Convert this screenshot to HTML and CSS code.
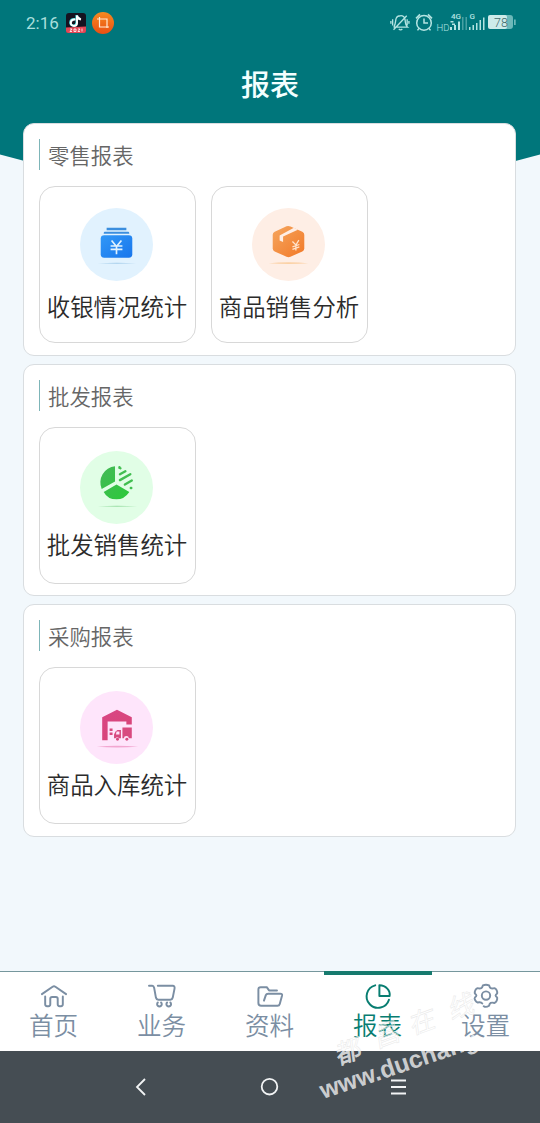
FILE: index.html
```html
<!DOCTYPE html>
<html lang="zh-CN">
<head>
<meta charset="utf-8">
<title>报表</title>
<link rel="stylesheet" href="styles.css">
</head>
<body>
<div class="phone">
  <svg class="backdrop" width="540" height="230" viewBox="0 0 540 230"><path d="M0 0H540V154.500L270 226L0 154.500Z" fill="#00767b"/></svg>
  <header class="status">
    <span class="clock">2:16</span>
    <svg class="app-icon" width="20" height="20" viewBox="0 0 20 20">
      <rect width="20" height="20" rx="3" fill="#151320"/>
      <path d="M0 14.500L20 13.500V18Q20 20 18 20H2Q0 20 0 18Z" fill="#e44756"/>
      <g fill="none" stroke-width="2"><path d="M9.500 6.500C3.500 6 3.500 13 8 13C10 13 11 12 11 10V2.500C11.500 5 12.500 6 15 6.500" stroke="#38d6d7" transform="translate(-.6 -.4)"/><path d="M9.500 6.500C3.500 6 3.500 13 8 13C10 13 11 12 11 10V2.500C11.500 5 12.500 6 15 6.500" stroke="#fff"/></g>
      <path d="M4 16l2 0-2 2.500h2M8 16h2v2.500H8zM12 16h2l-2 2.500h2M16 15.500v3" stroke="#fff" stroke-width=".8" fill="none"/>
    </svg>
    <svg class="crop-icon" width="22" height="22" viewBox="0 0 22 22"><defs><linearGradient id="crop" x2="0" y2="1"><stop stop-color="#f58a20"/><stop offset="1" stop-color="#e94f13"/></linearGradient></defs><circle cx="11" cy="11" r="11" fill="url(#crop)"/><path d="M7.500 5V15H17M5 7H15V16" fill="none" stroke="#ffe9d3" stroke-width="1.200"/></svg>
    <svg class="signals" width="130" height="24" viewBox="0 0 130 24">
      <g fill="none" stroke="#b4e4e2" stroke-width="1.500">
        <path transform="translate(3 1.200) scale(.88)" d="M4.500 16.500C6.500 14 6 10 7 7Q8 4 12 4Q16 3.800 17 8C18 12 16.500 14 20 17H4M10 19Q12 21 14 19M4 20L19 4M3 8v7M1 10v3M19.500 8v7M21.500 10v3"/>
        <g transform="translate(1 -.6)"><circle cx="36" cy="12.500" r="7.300"/><path d="M36 8V12.500H40M28 8L32 4M40 4L44 8M31 18L29.500 20M41 18L42.500 20"/></g>
      </g>
      <text x="49.500" y="19.500" class="hd">HD</text><text x="64" y="8" class="net">4G</text><text x="82.500" y="8" class="net">G</text>
      <g fill="#b4e4e2"><path d="M63 16h2v3h-2zM67 14h2v5h-2zM71 10.500h2V19h-2zM82 16h1.500v3H82zM85.500 14h1.500v5h-1.500zM89 12h1.500v7H89zM92.500 9h1.500v10h-1.500zM96 6.500h1.500V19H96zM63.500 10h3v1.500h-3zM65 12.500h3v1.500h-3z"/><path opacity=".4" d="M75 6h1.500v13H75zM78.500 6h1.500v13h-1.500z"/>
      <path opacity=".6" d="M118 4h5q3 0 3 3v8q0 3-3 3h-5zM127 8.500h1.700v5.500H127z"/></g>
      <rect x="101" y="4" width="19" height="14" rx="2" fill="#cdebea"/>
      <text x="107" y="16" class="battery">78</text>
    </svg>
  </header>
  <h1 class="page-title">报表</h1>
  <main class="reports">
    <section class="card">
      <h2 class="card-title">零售报表</h2>
      <div class="tiles">
        <div class="tile">
          <svg class="tile-icon" width="73" height="73" viewBox="0 0 74 74"><defs><linearGradient id="blue" x2="1" y2="1"><stop stop-color="#3098f7"/><stop offset="1" stop-color="#1976ec"/></linearGradient></defs><circle cx="37" cy="37" r="37" fill="#e1f2fe"/><path d="M27 20H47V22.500H27ZM25 24H49Q50 24 50 26H24Q24 24 25 24Z" fill="#3b8ede"/><rect x="21" y="27.500" width="32" height="23" rx="3.500" fill="url(#blue)"/><path d="M32 33L37 39L42 33M31 38.500H43M31 42H43M37 38.500V47" fill="none" stroke="#e1f2fe" stroke-width="1.700"/><path d="M18 56Q37 55 57 56Q37 57 18 56" fill="#a5cdea"/></svg>
          <span class="tile-label">收银情况统计</span>
        </div>
        <div class="tile">
          <svg class="tile-icon" width="73" height="73" viewBox="0 0 74 74"><defs><linearGradient id="orange" x2="1" y2="1"><stop stop-color="#f5a65f"/><stop offset="1" stop-color="#f27927"/></linearGradient></defs><circle cx="37" cy="37" r="37" fill="#feeee5"/><path d="M23 24L35 18.600Q37 18 39 18.800L51 24Q53 25 53 27V41Q53 43 51 44L39 49.400Q37 50.200 35 49.400L23 44Q21 43 21 41V27Q21 25 23 24Z" fill="url(#orange)"/><path d="M42.500 20L46.500 22L31.500 29V34.500L28 33V28Z" fill="#feeee5"/><path d="M41 34L44.500 37.500L47.500 32.500M41 39.500L48 37M41 42L48 39.500M44.500 37V43" fill="none" stroke="#ffe3cb" stroke-width="1.300"/><path d="M17 56Q37 54 57 56Q37 57.500 17 56" fill="#fbd1a5"/></svg>
          <span class="tile-label">商品销售分析</span>
        </div>
      </div>
    </section>
    <section class="card card-short">
      <h2 class="card-title">批发报表</h2>
      <div class="tiles">
        <div class="tile tile-low">
          <svg class="tile-icon" width="73" height="73" viewBox="0 0 74 74"><defs><linearGradient id="green" x2="1" y2="1"><stop stop-color="#45b858"/><stop offset="1" stop-color="#2bca39"/></linearGradient></defs><circle cx="37" cy="37" r="37" fill="#e1fee6"/><path d="M35.500 15.500V31L22 38.500A16.500 16.500 0 0 1 35.500 15.500ZM37 34L50 41.500Q45 49 37 49Q28 49 24 41.500Z" fill="url(#green)"/><path d="M40 16.500V17L41 17.500M40.500 23.500L46 20.500M40.500 29.500L51 23.500M45.500 34L52.500 30M51.500 37.500H52" stroke="#41be50" stroke-width="2.400" stroke-linecap="round" fill="none"/><path d="M18 56Q37 55 58 56Q37 57 18 56" fill="#98dda3"/></svg>
          <span class="tile-label">批发销售统计</span>
        </div>
      </div>
    </section>
    <section class="card">
      <h2 class="card-title">采购报表</h2>
      <div class="tiles">
        <div class="tile tile-low">
          <svg class="tile-icon" width="73" height="73" viewBox="0 0 74 74"><defs><linearGradient id="pink" x2=".6" y2="1"><stop stop-color="#d94685"/><stop offset="1" stop-color="#d84577"/></linearGradient></defs><circle cx="37" cy="37" r="37" fill="#fee5fb"/><path d="M22.500 50V26.500L37.500 19L52.500 26.500V34H47V31H28V50Z" fill="url(#pink)"/><path d="M30 38H33V40.500H30ZM30 42H33V44.500H30ZM43 37H52.500V48H49.500A2.500 2.500 0 0 0 44.500 48H43ZM36 41L38 39.500H41.500V48H39.500A2 2 0 0 0 36 48H34.500V44Z" fill="#d84a7f"/><path d="M37 41H40V44H36.500Z" fill="#fee5fb"/><circle cx="38" cy="49" r="1.500" fill="#d84a7f"/><circle cx="47.500" cy="49" r="1.500" fill="#d84a7f"/><path d="M17 56.500Q37 54.500 59 56.500Q37 58 17 56.500" fill="#f2a7d1"/></svg>
          <span class="tile-label">商品入库统计</span>
        </div>
      </div>
    </section>
  </main>
  <nav class="tabs">
    <div class="tab"><svg class="tab-icon" viewBox="0 0 28 28"><path d="M1 12L12.500 4Q14 3 15.500 4L27 12M4.500 14.500V23Q4.500 25 6.500 25H8Q10 25 10 23V17Q10 15 12 15H16Q18 15 18 17V23Q18 25 20 25H21.500Q23.500 25 23.500 23V14.500"/></svg><span>首页</span></div>
    <div class="tab"><svg class="tab-icon" viewBox="0 0 28 28"><path d="M0 3H3.500Q5 3 5.500 5L7.500 16Q8 18 10 18H23Q25 18 25.500 16L27.500 6Q28 3 25.500 3H9.500"/><path d="M9.500 21A2.500 2.500 0 1 0 13 21M19.500 21A2.500 2.500 0 1 0 23 21"/></svg><span>业务</span></div>
    <div class="tab"><svg class="tab-icon" viewBox="0 0 28 28"><path d="M21.500 8H13L10.500 4.500H4Q1.500 4.500 1.500 7V21.500Q1.500 24.500 4.500 24.500H22Q24 24.500 24.500 22.500L27 13.500Q27.500 11.500 25 11.500H12Q10 11.500 9.500 13L7.500 19"/></svg><span>资料</span></div>
    <div class="tab active"><svg class="tab-icon" viewBox="0 0 28 28"><path d="M11 2.500A12.300 12.300 0 1 0 25.800 18M15.500 2.500V14H26.500C27.500 8 22.500 2.500 15.500 2.500Z"/></svg><span>报表</span></div>
    <div class="tab"><svg class="tab-icon" viewBox="0 0 28 28"><path d="M5 21C3 20.500 1 17 2 15.700C4.200 14 4.200 13 2 11.300C1.500 9 3 6 5 5.500C8.500 6.500 10 5.500 10.700 2.500C13 1.500 15 1.500 17.300 2.500C18 5.500 19.500 6.500 23 5.500C25 6 26.500 9 26 11.300C23.800 13 23.800 14 26 15.700C26.500 18 25 21 23 21.500C19.500 20.500 18 21.500 17.300 24.500C15 26 13 26 11.500 25M5 21C7.500 20.500 9 20.500 10 22"/><circle cx="14" cy="13.500" r="4.500"/></svg><span>设置</span></div>
  </nav>
  <footer class="system-nav">
    <svg width="129" height="24" viewBox="0 0 129 24"><path d="M68 4L60 12L68 20"/></svg>
    <svg width="129" height="24" viewBox="0 0 129 24"><circle cx="63.500" cy="11.700" r="7.800"/></svg>
    <svg width="129" height="24" viewBox="0 0 129 24"><path d="M56 5.500H71M56 12H71M56 18.500H71"/></svg>
  </footer>
  <svg class="watermark" width="240" height="163" viewBox="0 0 240 163">
    <defs><clipPath id="dark"><rect y="91" width="240" height="72"/></clipPath></defs>
    <g class="stamp"><text transform="translate(38 105) rotate(-20) skewX(-12)">都</text><text transform="translate(77 88) rotate(-20) skewX(-12)">昌</text><text transform="translate(112 75) rotate(-20) skewX(-12)">在</text><text transform="translate(151 60) rotate(-20) skewX(-12)">线</text></g>
    <g class="stamp-dark" clip-path="url(#dark)"><text transform="translate(38 105) rotate(-20) skewX(-12)">都</text></g>
    <text class="site" transform="translate(23 139) rotate(-18.500)">www.duchang</text>
  </svg>
</div>
</body>
</html>
```
FILE: styles.css
```css
* { box-sizing: border-box; }
body {
  margin: 0;
  font-family: "Noto Sans CJK SC", "Noto Sans", sans-serif;
  font-weight: 350;
  background: #f2f8fc;
}
.phone {
  position: relative;
  display: flex;
  flex-direction: column;
  width: 540px;
  height: 1123px;
  overflow: hidden;
  isolation: isolate;
}
.backdrop { position: absolute; inset: 0; z-index: -1; }
.status {
  display: flex;
  align-items: center;
  height: 45px;
  padding: 0 23px 0 26px;
}
.clock {
  width: 40px;
  font: 400 17px Roboto, sans-serif;
  color: #a9dfdc;
}
.crop-icon { margin-left: 6px; }
.signals { margin-left: auto; }
.signals text { font-family: Roboto, sans-serif; fill: #b4e4e2; }
.signals .hd { font-size: 9.500px; }
.signals .net { font-size: 8px; font-weight: 500; }
.signals .battery { font-size: 12.500px; fill: #426a6c; }
.page-title {
  height: 78px;
  margin: 0;
  font-size: 29px;
  line-height: 76px;
  font-weight: 500;
  color: #f2ffff;
  text-align: center;
}
.reports {
  display: flex;
  flex: 1;
  flex-direction: column;
  gap: 8px;
  padding: 0 24px 0 23px;
}
.card {
  height: 233px;
  padding: 15px;
  background: #fff;
  border: 1px solid #d9dde0;
  border-radius: 11px;
}
.card-short { height: 232px; }
.card-title {
  height: 31px;
  margin: 0 0 16px;
  padding-left: 8px;
  border-left: 1px solid #7db5b8;
  font-size: 21.400px;
  line-height: 31px;
  font-weight: 350;
  color: #666;
}
.tiles { display: flex; gap: 15px; }
.tile {
  display: flex;
  flex-direction: column;
  align-items: center;
  width: 157px;
  height: 157px;
  padding: 21px 1px 0 0;
  border: 1px solid #d8d8d8;
  border-radius: 16px;
}
.tile-icon { flex: none; margin-right: 1px; }
.tile-label {
  margin-top: 7px;
  font-size: 23.400px;
  line-height: 36px;
  color: #2b2b2b;
  white-space: nowrap;
}
.tile-low { padding-top: 23px; }
.tile-low .tile-label { margin-top: 2px; }
.tabs {
  display: flex;
  height: 80px;
  background: #fff;
  border-top: 1px solid #76979d;
}
.tab {
  display: flex;
  flex: 1;
  flex-direction: column;
  align-items: center;
  gap: 1px;
  padding: 11px 1px 0 0;
  font-size: 24.600px;
  line-height: 28px;
  color: #7b8ea3;
}
.tab-icon {
  width: 26px;
  height: 26px;
  fill: none;
  stroke: currentColor;
  stroke-width: 2.100;
  stroke-linecap: round;
  stroke-linejoin: round;
  overflow: visible;
}
.tab.active {
  margin-top: -1px;
  padding-top: 8px;
  border-top: 4px solid #167a6e;
  color: #087d71;
}
.system-nav {
  display: flex;
  justify-content: center;
  align-items: center;
  height: 72px;
  background: #454d53;
}
.system-nav svg { fill: none; stroke: #f2f4f5; stroke-width: 1.800; }
.watermark { position: absolute; right: 0; bottom: 0; }
.stamp {
  font-size: 26px;
  font-weight: 400;
  fill: #fff;
  fill-opacity: .35;
  stroke: #e8e8e8;
  stroke-width: .5;
}
.stamp-dark { font-size: 26px; font-weight: 400; fill: #cfd2d4; }
.site {
  font-family: "Liberation Sans", Arial, sans-serif;
  font-size: 24.500px;
  font-weight: 700;
  fill: #fff;
  fill-opacity: .74;
}
```
